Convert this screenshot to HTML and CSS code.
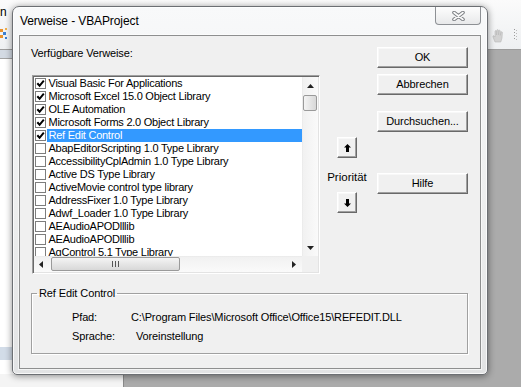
FILE: index.html
```html
<!DOCTYPE html>
<html lang="de">
<head>
<meta charset="utf-8">
<title>Verweise - VBAProject</title>
<link rel="stylesheet" href="styles.css">
</head>
<body>
<div class="desktop">
  <div class="ribbon">
    <div class="ribbon-left">
      <span class="ribbon-text">n</span>
      <svg class="ribbon-icon" width="8" height="12" viewBox="0 0 8 12"><rect x="0" y="1" width="3" height="3" fill="#e8912c"/><rect x="3" y="4" width="3" height="3" fill="#3a7fd0"/><rect x="0" y="7" width="3" height="3" fill="#e8912c"/><rect x="5" y="0" width="2" height="2" fill="#f2b04d"/><rect x="5" y="9" width="2" height="2" fill="#3a7fd0"/></svg>
    </div>
    <div class="ribbon-right">
      <svg class="hand" width="12" height="14" viewBox="0 0 12 14"><path d="M3 13 L1 8 Q0.5 6.5 2 6.8 L3 8 L3 2 Q3.5 1 4.3 2 L4.5 6 L4.8 1 Q5.6 0 6.3 1 L6.4 6 L6.9 1.6 Q7.7 0.8 8.3 1.8 L8.3 6.3 L9 3 Q9.8 2.3 10.4 3.2 L10 9 L8.8 13 Z" fill="#d2d2d2" stroke="#b8b8b8" stroke-width="0.6"/></svg>
      <svg class="dots" width="4" height="12" viewBox="0 0 4 12"><rect x="0" y="0" width="1" height="1" fill="#999"/><rect x="0" y="3" width="1" height="1" fill="#999"/><rect x="0" y="6" width="1" height="1" fill="#999"/><rect x="0" y="9" width="1" height="1" fill="#999"/><rect x="2" y="1" width="1" height="1" fill="#bbb"/><rect x="2" y="4" width="1" height="1" fill="#bbb"/><rect x="2" y="7" width="1" height="1" fill="#bbb"/><rect x="2" y="10" width="1" height="1" fill="#bbb"/></svg>
    </div>
  </div>
  <div class="sheet">
    <div class="sheet-left">
      <div class="band"></div>
      <div class="sheet-white"></div>
      <div class="band band2"></div>
      <div class="sheet-white2"></div>
    </div>
    <div class="sheet-right"></div>
  </div>

  <div class="dialog">
    <div class="titlebar">
      <div class="title">Verweise - VBAProject</div>
      <div class="close">
        <svg width="13" height="10" viewBox="0 0 13 10"><path d="M2 1.5 L11 8.5 M11 1.5 L2 8.5" stroke="#7c7f83" stroke-width="3.6" stroke-linecap="round"/><path d="M2 1.5 L11 8.5 M11 1.5 L2 8.5" stroke="#fbfbfb" stroke-width="1.6" stroke-linecap="round"/></svg>
      </div>
    </div>
    <div class="client">
      <div class="top">
        <div class="leftcol">
          <div class="label">Verfügbare Verweise:</div>
          <div class="list">
            <div class="items">
              <div class="item"><span class="cb"><svg width="9" height="9" viewBox="0 0 9 9"><path d="M1.3 4.3 L3.6 6.8 L7.8 1.6" fill="none" stroke="#000" stroke-width="2"/></svg></span><span class="text">Visual Basic For Applications</span></div>
              <div class="item"><span class="cb"><svg width="9" height="9" viewBox="0 0 9 9"><path d="M1.3 4.3 L3.6 6.8 L7.8 1.6" fill="none" stroke="#000" stroke-width="2"/></svg></span><span class="text">Microsoft Excel 15.0 Object Library</span></div>
              <div class="item"><span class="cb"><svg width="9" height="9" viewBox="0 0 9 9"><path d="M1.3 4.3 L3.6 6.8 L7.8 1.6" fill="none" stroke="#000" stroke-width="2"/></svg></span><span class="text">OLE Automation</span></div>
              <div class="item"><span class="cb"><svg width="9" height="9" viewBox="0 0 9 9"><path d="M1.3 4.3 L3.6 6.8 L7.8 1.6" fill="none" stroke="#000" stroke-width="2"/></svg></span><span class="text">Microsoft Forms 2.0 Object Library</span></div>
              <div class="item sel"><span class="cb"><svg width="9" height="9" viewBox="0 0 9 9"><path d="M1.3 4.3 L3.6 6.8 L7.8 1.6" fill="none" stroke="#000" stroke-width="2"/></svg></span><span class="text">Ref Edit Control</span></div>
              <div class="item"><span class="cb"></span><span class="text">AbapEditorScripting 1.0 Type Library</span></div>
              <div class="item"><span class="cb"></span><span class="text">AccessibilityCplAdmin 1.0 Type Library</span></div>
              <div class="item"><span class="cb"></span><span class="text">Active DS Type Library</span></div>
              <div class="item"><span class="cb"></span><span class="text">ActiveMovie control type library</span></div>
              <div class="item"><span class="cb"></span><span class="text">AddressFixer 1.0 Type Library</span></div>
              <div class="item"><span class="cb"></span><span class="text">Adwf_Loader 1.0 Type Library</span></div>
              <div class="item"><span class="cb"></span><span class="text">AEAudioAPODlllib</span></div>
              <div class="item"><span class="cb"></span><span class="text">AEAudioAPODlllib</span></div>
              <div class="item"><span class="cb"></span><span class="text">AgControl 5.1 Type Library</span></div>
            </div>
            <div class="vscroll">
              <div class="arrow-v"><svg width="7" height="4" viewBox="0 0 7 4"><path d="M0 4 L3.5 0 L7 4 Z" fill="#222"/></svg></div>
              <div class="vthumb"></div>
              <div class="vtrack"></div>
              <div class="arrow-v"><svg width="7" height="4" viewBox="0 0 7 4"><path d="M0 0 L3.5 4 L7 0 Z" fill="#222"/></svg></div>
            </div>
            <div class="hscroll">
              <div class="arrow-h left"><svg width="4" height="7" viewBox="0 0 4 7"><path d="M4 0 L0 3.5 L4 7 Z" fill="#222"/></svg></div>
              <div class="hthumb"><svg width="7" height="6" viewBox="0 0 7 6"><path d="M0.5 0 V6 M3.5 0 V6 M6.5 0 V6" stroke="#555" stroke-width="1"/></svg></div>
              <div class="htrack"></div>
              <div class="arrow-h"><svg width="4" height="7" viewBox="0 0 4 7"><path d="M0 0 L4 3.5 L0 7 Z" fill="#222"/></svg></div>
            </div>
            <div class="corner"></div>
          </div>
        </div>
        <div class="midcol">
          <div class="btn sq"><svg width="7" height="8" viewBox="0 0 7 8"><path d="M3.5 0 L7 3.6 L5 3.6 L5 8 L2 8 L2 3.6 L0 3.6 Z" fill="#000"/></svg></div>
          <div class="prio">Priorität</div>
          <div class="btn sq down"><svg width="7" height="8" viewBox="0 0 7 8"><path d="M3.5 8 L7 4.4 L5 4.4 L5 0 L2 0 L2 4.4 L0 4.4 Z" fill="#000"/></svg></div>
        </div>
        <div class="rightcol">
          <div class="btn">OK</div>
          <div class="btn b2">Abbrechen</div>
          <div class="btn b3">Durchsuchen...</div>
          <div class="btn b4">Hilfe</div>
        </div>
      </div>
      <fieldset class="group">
        <legend>Ref Edit Control</legend>
        <div class="rows">
          <span>Pfad:</span><span>C:\Program Files\Microsoft Office\Office15\REFEDIT.DLL</span>
          <span>Sprache:</span><span class="lang">Voreinstellung</span>
        </div>
      </fieldset>
    </div>
  </div>
</div>
</body>
</html>
```

FILE: styles.css
```css
html, body {
  margin: 0;
  padding: 0;
}
body {
  width: 521px;
  height: 387px;
  overflow: hidden;
  background: #ababab;
  font-family: "Liberation Sans", Arial, sans-serif;
  color: #000;
}
.desktop {
  position: relative;
  width: 521px;
  height: 387px;
}
.ribbon {
  height: 50px;
  box-sizing: border-box;
  border-bottom: 1px solid #9c9c9c;
  background: linear-gradient(#fbfbfb, #eef0f2);
  display: flex;
  justify-content: space-between;
}
.ribbon-left {
  display: flex;
  flex-direction: column;
  padding-top: 5px;
}
.ribbon-text {
  font-size: 12px;
  line-height: 14px;
  margin-left: 0;
}
.ribbon-icon {
  margin-top: 9px;
}
.ribbon-right {
  display: flex;
  align-items: flex-start;
  gap: 10px;
  padding-top: 29px;
  padding-right: 3px;
}
.sheet {
  display: flex;
  height: 337px;
}
.sheet-left {
  width: 123px;
  display: flex;
  flex-direction: column;
  border-right: 1px solid #8a8a8a;
  background: #f4f4f4;
}
.band {
  height: 8px;
  background: #d3dae3;
  border-bottom: 1px solid #a3a3a3;
}
.sheet-white {
  height: 288px;
  background: #fff;
}
.band2 {
  height: 13px;
  border-bottom: none;
  background: #d2dce8;
}
.sheet-white2 {
  height: 14px;
  background: #fff;
}
.sheet-right {
  flex: 1;
  background: #ababab;
}

/* dialog window */
.dialog {
  position: absolute;
  left: 12px;
  top: 6px;
  width: 476px;
  height: 369px;
  box-sizing: border-box;
  border: 1px solid #6c6f73;
  border-radius: 7px 7px 5px 5px;
  background: linear-gradient(#f8f9fa, #eceded 60%, #e2e3e4);
  box-shadow: 0 1px 7px rgba(0, 0, 0, 0.45), inset 0 0 0 1px rgba(255, 255, 255, 0.75);
  display: flex;
  flex-direction: column;
}
.titlebar {
  height: 28px;
  display: flex;
  align-items: flex-start;
  padding: 0 6px 0 7px;
}
.title {
  flex: 1;
  font-size: 12px;
  line-height: 28px;
  letter-spacing: -0.1px;
  color: #000;
}
.close {
  width: 46px;
  height: 18px;
  box-sizing: border-box;
  border: 1px solid #8d9094;
  border-top: none;
  border-radius: 0 0 4px 4px;
  background: linear-gradient(#fdfdfd, #e8e9ea);
  display: flex;
  align-items: center;
  justify-content: center;
  padding-top: 1px;
}
.client {
  flex: 1;
  margin: 0 6px 5px 6px;
  border: 1px solid #8e8f8f;
  background: #f0f0f0;
  box-shadow: 0 0 0 1px rgba(255, 255, 255, 0.6);
  display: flex;
  flex-direction: column;
  font-size: 11px;
}
.top {
  display: flex;
  height: 238px;
}
.leftcol {
  margin-left: 12px;
  width: 288px;
}
.label {
  padding-top: 10px;
  line-height: 15px;
  height: 15px;
  margin-left: -1px;
  font-size: 11px;
  letter-spacing: -0.15px;
}
.list {
  margin-top: 14px;
  height: 199px;
  box-sizing: border-box;
  border: 1px solid;
  border-color: #a0a0a0 #ffffff #ffffff #a0a0a0;
  box-shadow: inset 1px 1px 0 #696969, inset -1px -1px 0 #e3e3e3;
  background: #fff;
  padding: 1px;
  display: grid;
  grid-template-columns: 1fr 16px;
  grid-template-rows: 1fr 16px;
}
.items {
  overflow: hidden;
  min-width: 0;
  min-height: 0;
}
.item {
  height: 13px;
  display: flex;
  align-items: center;
  padding-left: 1px;
}
.cb {
  width: 11px;
  height: 11px;
  box-sizing: border-box;
  border: 1px solid #7d7d7d;
  background: #fff;
  flex: none;
  display: flex;
  align-items: center;
  justify-content: center;
}
.text {
  flex: 1;
  margin-left: 1px;
  padding-left: 1.5px;
  font-size: 11px;
  line-height: 13px;
  letter-spacing: -0.25px;
  white-space: nowrap;
}
.item.sel .text {
  background: #3399ff;
  color: #fff;
}
.vscroll {
  display: flex;
  flex-direction: column;
  background: linear-gradient(90deg, #e6e6e6 0, #f1f1f1 1px, #fafafa 100%);
}
.arrow-v {
  height: 17px;
  flex: none;
  display: flex;
  align-items: center;
  justify-content: center;
}
.vthumb {
  height: 16px;
  margin: 1px 1px 0 1px;
  box-sizing: border-box;
  border: 1px solid #9a9a9a;
  border-radius: 2px;
  background: linear-gradient(90deg, #f4f4f4, #e6e6e6 50%, #d8d8d8);
  flex: none;
}
.vtrack {
  flex: 1;
}
.hscroll {
  display: flex;
  background: linear-gradient(#e6e6e6 0, #f1f1f1 1px, #fafafa 100%);
}
.arrow-h {
  width: 17px;
  flex: none;
  display: flex;
  align-items: center;
  justify-content: center;
}
.arrow-h.left {
  padding-right: 3px;
  width: 14px;
}
.hthumb {
  width: 129px;
  flex: none;
  margin: 1px 0;
  box-sizing: border-box;
  border: 1px solid #9a9a9a;
  border-radius: 2px;
  background: linear-gradient(#f4f4f4, #e6e6e6 50%, #d8d8d8);
  display: flex;
  align-items: center;
  justify-content: center;
}
.htrack {
  flex: 1;
}
.corner {
  background: #f0f0f0;
}
.midcol {
  margin-left: 5px;
  width: 44px;
  display: flex;
  flex-direction: column;
  align-items: center;
  padding-top: 101px;
}
.rightcol {
  margin-left: 8px;
  width: 91px;
  padding-top: 11px;
  display: flex;
  flex-direction: column;
}
.btn {
  height: 21px;
  box-sizing: border-box;
  border: 1px solid;
  border-color: #ffffff #696969 #696969 #ffffff;
  box-shadow: inset -1px -1px 0 #a0a0a0, inset 1px 1px 0 #f8f8f8;
  background: #f0f0f0;
  display: flex;
  align-items: center;
  justify-content: center;
  font-size: 11px;
  letter-spacing: -0.1px;
  padding-bottom: 1px;
}
.btn.sq {
  width: 20px;
  padding: 0;
}
.b2 {
  margin-top: 6px;
}
.b3 {
  margin-top: 16px;
}
.b4 {
  margin-top: 41px;
}
.prio {
  margin-top: 12px;
  line-height: 14px;
  font-size: 11.5px;
  white-space: nowrap;
}
.btn.down {
  margin-top: 8px;
}
.group {
  margin: 13px 0 0 11px;
  width: 437px;
  box-sizing: border-box;
  padding: 7px 0 8px 0;
  border: 1px solid #a0a0a0;
  box-shadow: 1px 1px 0 #ffffff, inset 1px 1px 0 #ffffff;
  min-width: 0;
}
.group legend {
  margin-left: 5px;
  padding: 0 2px;
  font-size: 11px;
  line-height: 13px;
  letter-spacing: -0.1px;
}
.rows {
  margin-left: 40px;
  display: grid;
  grid-template-columns: 59px auto;
  grid-auto-rows: 19px;
  align-items: center;
  font-size: 11px;
  letter-spacing: -0.13px;
  white-space: nowrap;
}
.lang {
  padding-left: 5px;
}
```
